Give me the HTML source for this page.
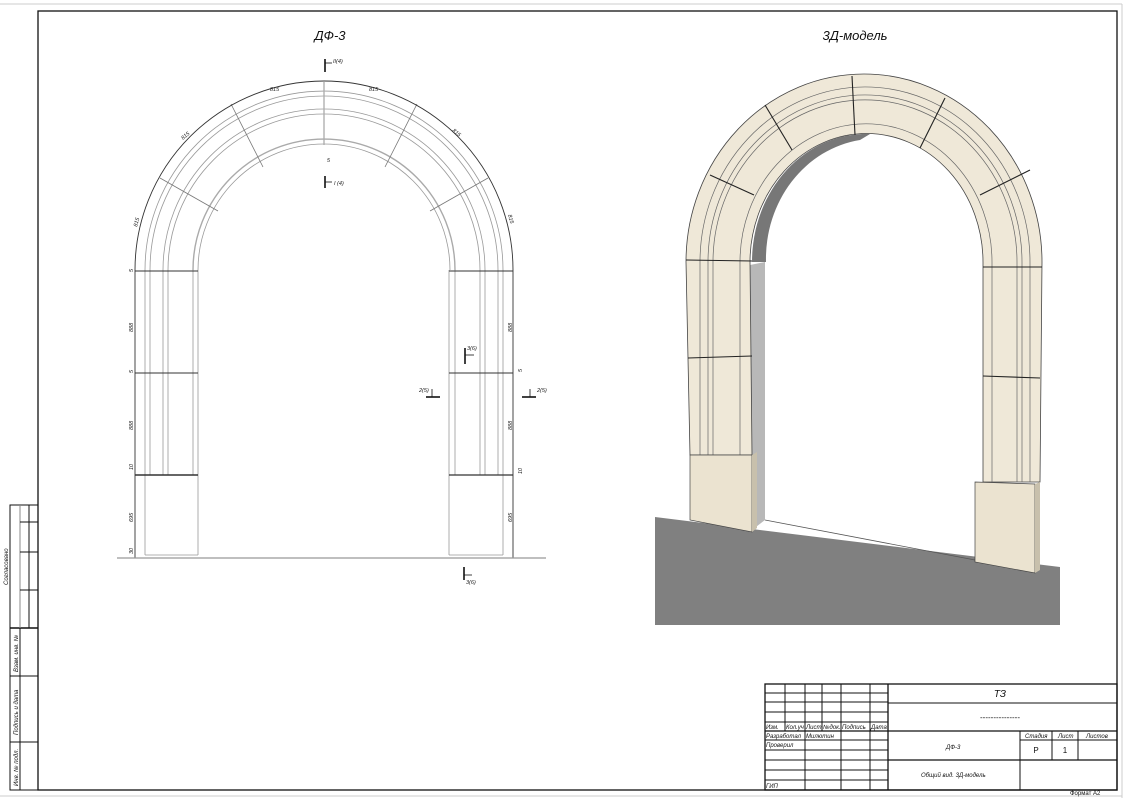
<!DOCTYPE html>
<html><head><meta charset="utf-8"><style>
html,body{margin:0;padding:0;background:#fff;}
svg{display:block;font-family:"Liberation Sans",sans-serif;}
</style></head><body>
<svg width="1125" height="798" viewBox="0 0 1125 798" xmlns="http://www.w3.org/2000/svg">
<rect width="1125" height="798" fill="#fff"/>
<line x1="0" y1="4" x2="1122" y2="4" stroke="#ccc"/>
<line x1="1122" y1="4" x2="1122" y2="798" stroke="#ccc"/>
<line x1="0" y1="796" x2="1122" y2="796" stroke="#ccc"/>
<rect x="38" y="11" width="1079" height="779" fill="none" stroke="#111" stroke-width="1.3"/>
<g stroke="#111" fill="none" stroke-width="1">
<rect x="10" y="505" width="28" height="285"/>
<line x1="10" y1="628" x2="38" y2="628" stroke-width="1.5"/>
<line x1="29" y1="505" x2="29" y2="628"/>
<line x1="20" y1="505" x2="20" y2="628" stroke="#888"/>
<line x1="20" y1="522" x2="38" y2="522"/>
<line x1="20" y1="552" x2="38" y2="552"/>
<line x1="20" y1="590" x2="38" y2="590"/>
<line x1="20" y1="628" x2="20" y2="790"/>
<line x1="10" y1="676" x2="38" y2="676"/>
<line x1="10" y1="742" x2="38" y2="742"/>
</g>
<g font-size="6" fill="#111" font-style="italic">
<text transform="translate(8,585) rotate(-90)">Согласовано</text>
<text transform="translate(18,672) rotate(-90)">Взам. инв. №</text>
<text transform="translate(18,735) rotate(-90)">Подпись и дата</text>
<text transform="translate(18,786) rotate(-90)">Инв. № подл.</text>
</g>

<text x="330" y="40" font-size="13" font-style="italic" text-anchor="middle" fill="#111">ДФ-3</text>
<text x="855" y="40" font-size="13" font-style="italic" text-anchor="middle" fill="#111">3Д-модель</text>

<g fill="none" stroke="#999" stroke-width="0.8">
<path d="M145 270 A179 179 0 0 1 503 270"/>
<path d="M150 270 A174 174 0 0 1 498 270"/>
<path d="M163 270 A161 161 0 0 1 485 270"/>
<path d="M168 270 A156 156 0 0 1 480 270"/>
<path d="M193 270 A131 131 0 0 1 455 270" stroke="#aaa" stroke-width="1.4"/>
<path d="M198 270 A126 126 0 0 1 450 270"/>
<line x1="145" y1="270" x2="145" y2="555"/><line x1="150" y1="270" x2="150" y2="475"/>
<line x1="163" y1="270" x2="163" y2="475"/><line x1="168" y1="270" x2="168" y2="475"/>
<line x1="193" y1="270" x2="193" y2="475"/><line x1="198" y1="270" x2="198" y2="555"/>
<line x1="503" y1="270" x2="503" y2="555"/><line x1="498" y1="270" x2="498" y2="475"/>
<line x1="485" y1="270" x2="485" y2="475"/><line x1="480" y1="270" x2="480" y2="475"/>
<line x1="455" y1="270" x2="455" y2="475"/><line x1="449" y1="270" x2="449" y2="555"/>
<line x1="145" y1="555" x2="198" y2="555"/><line x1="449" y1="555" x2="503" y2="555"/>
<line x1="324" y1="82" x2="324" y2="145" stroke="#aaa" stroke-width="1.3"/>
<line x1="231" y1="104" x2="263" y2="167" stroke="#777"/>
<line x1="417" y1="104" x2="385" y2="167" stroke="#777"/>
<line x1="160" y1="178" x2="218" y2="211" stroke="#777"/>
<line x1="488" y1="178" x2="430" y2="211" stroke="#777"/>
</g>
<g stroke="#333" stroke-width="0.9" fill="none">
<path d="M135 270 A189 189 0 0 1 513 270"/>
<line x1="135" y1="270" x2="135" y2="558"/>
<line x1="513" y1="270" x2="513" y2="558"/>
<line x1="135" y1="271" x2="198" y2="271"/><line x1="449" y1="271" x2="513" y2="271"/>
<line x1="135" y1="373" x2="198" y2="373"/><line x1="449" y1="373" x2="513" y2="373"/>
<line x1="135" y1="475" x2="198" y2="475" stroke-width="1.6"/><line x1="449" y1="475" x2="513" y2="475" stroke-width="1.2"/>
<line x1="117" y1="558" x2="546" y2="558" stroke="#999" stroke-width="1.3"/>
</g>
<g stroke="#111" stroke-width="1.6">
<line x1="325" y1="59" x2="325" y2="72"/><line x1="325" y1="63" x2="332" y2="63" stroke-width="0.8"/>
<line x1="325" y1="176" x2="325" y2="188"/><line x1="325" y1="182" x2="332" y2="182" stroke-width="0.8"/>
<line x1="465" y1="348" x2="465" y2="364"/><line x1="465" y1="355" x2="474" y2="355" stroke-width="0.8"/>
<line x1="426" y1="397" x2="440" y2="397"/><line x1="432" y1="389" x2="432" y2="397" stroke-width="0.8"/>
<line x1="522" y1="397" x2="536" y2="397"/><line x1="530" y1="389" x2="530" y2="397" stroke-width="0.8"/>
<line x1="464" y1="567" x2="464" y2="580"/><line x1="464" y1="575" x2="472" y2="575" stroke-width="0.8"/>
</g>
<g font-size="5.5" fill="#222" font-style="italic">
<text x="333" y="63">II(4)</text><text x="334" y="185">I (4)</text>
<text x="467" y="350">3(6)</text><text x="419" y="392">2(5)</text><text x="537" y="392">2(5)</text>
<text x="466" y="584">3(6)</text>
<text x="270" y="91">815</text><text x="369" y="91">815</text>
<text transform="translate(183,140) rotate(-40)">815</text>
<text transform="translate(452,131) rotate(40)">815</text>
<text transform="translate(137,227) rotate(-75)">815</text>
<text transform="translate(508,215) rotate(75)">815</text>
<text transform="translate(133,332) rotate(-90)">888</text>
<text transform="translate(133,430) rotate(-90)">888</text>
<text transform="translate(133,522) rotate(-90)">695</text>
<text transform="translate(133,554) rotate(-90)">30</text>
<text transform="translate(133,470) rotate(-90)">10</text>
<text transform="translate(133,272) rotate(-90)">5</text>
<text transform="translate(133,373) rotate(-90)">5</text>
<text transform="translate(512,332) rotate(-90)">888</text>
<text transform="translate(512,430) rotate(-90)">888</text>
<text transform="translate(512,522) rotate(-90)">695</text>
<text transform="translate(522,372) rotate(-90)">5</text>
<text transform="translate(522,474) rotate(-90)">10</text>
<text x="327" y="162">5</text>
</g>

<rect x="655" y="53" width="405" height="572" fill="#fff"/>
<polygon points="655,517 1060,567 1060,625 655,625" fill="#808080"/>
<line x1="765" y1="520" x2="975" y2="560" stroke="#555" stroke-width="0.8"/>
<polygon points="750,265 765,262 765,520 752,530" fill="#b8b8b8"/>
<path d="M752 262 A114 128 0 0 1 870 134 L860 140 A110 120 0 0 0 766 262 Z" fill="#555" opacity="0.8"/>
<path d="M686 262 A178 188 0 0 1 1042 262 L1040 482 L983 482 L983 262 A116 128 0 0 0 750 262 L752 455 L690 455 Z" fill="#efe8d8" stroke="#444" stroke-width="0.8"/>
<g fill="none" stroke="#666" stroke-width="0.7">
<path d="M700 262 A164 174 0 0 1 1030 262"/>
<path d="M708 262 A156 166 0 0 1 1022 262"/>
<path d="M713 262 A150 160 0 0 1 1017 262"/>
<path d="M740 262 A124 136 0 0 1 992 262"/>
<line x1="700" y1="262" x2="700" y2="455"/><line x1="708" y1="262" x2="708" y2="455"/>
<line x1="713" y1="262" x2="713" y2="455"/><line x1="740" y1="262" x2="740" y2="455"/>
<line x1="1030" y1="262" x2="1030" y2="482"/><line x1="1022" y1="262" x2="1022" y2="482"/>
<line x1="1017" y1="262" x2="1017" y2="482"/><line x1="992" y1="262" x2="992" y2="482"/>
</g>
<g stroke="#222" stroke-width="1.1" fill="none">
<line x1="686" y1="260" x2="752" y2="261"/><line x1="983" y1="267" x2="1042" y2="267"/>
<line x1="688" y1="358" x2="752" y2="356"/><line x1="983" y1="376" x2="1040" y2="378"/>
<line x1="852" y1="76" x2="855" y2="135"/>
<line x1="765" y1="105" x2="792" y2="150"/>
<line x1="945" y1="98" x2="920" y2="148"/>
<line x1="710" y1="175" x2="754" y2="195"/>
<line x1="1030" y1="170" x2="980" y2="195"/>
</g>
<polygon points="690,455 752,455 752,532 690,520" fill="#ebe3d0" stroke="#444" stroke-width="0.7"/>
<polygon points="752,455 757,452 757,528 752,532" fill="#c8c0ac"/>
<polygon points="975,482 1035,484 1035,573 975,562" fill="#ebe3d0" stroke="#444" stroke-width="0.7"/>
<polygon points="1035,484 1040,482 1040,570 1035,573" fill="#c8c0ac"/>

<g stroke="#111" fill="none" stroke-width="1">
<rect x="765" y="684" width="352" height="106" stroke-width="1.3"/>
<line x1="888" y1="684" x2="888" y2="790" stroke-width="1.3"/>
<line x1="785" y1="684" x2="785" y2="731"/><line x1="805" y1="684" x2="805" y2="790"/>
<line x1="822" y1="684" x2="822" y2="731"/><line x1="841" y1="684" x2="841" y2="790"/>
<line x1="870" y1="684" x2="870" y2="790"/>
<line x1="765" y1="693" x2="888" y2="693"/><line x1="765" y1="702" x2="888" y2="702"/>
<line x1="765" y1="712" x2="888" y2="712"/><line x1="765" y1="722" x2="888" y2="722"/>
<line x1="765" y1="731" x2="1117" y2="731" stroke-width="1.3"/>
<line x1="765" y1="740" x2="888" y2="740"/><line x1="765" y1="750" x2="888" y2="750"/>
<line x1="765" y1="760" x2="888" y2="760"/><line x1="765" y1="770" x2="888" y2="770"/>
<line x1="765" y1="780" x2="888" y2="780"/>
<line x1="888" y1="703" x2="1117" y2="703"/>
<line x1="888" y1="760" x2="1117" y2="760" stroke-width="1.3"/>
<line x1="1020" y1="731" x2="1020" y2="790"/>
<line x1="1052" y1="731" x2="1052" y2="760"/><line x1="1078" y1="731" x2="1078" y2="760"/>
<line x1="1020" y1="740" x2="1117" y2="740"/>
</g>
<g font-size="6" font-style="italic" fill="#111">
<text x="766" y="729">Изм.</text><text x="786" y="729">Кол.уч</text><text x="806" y="729">Лист</text>
<text x="823" y="729">№док.</text><text x="842" y="729">Подпись</text><text x="871" y="729">Дата</text>
<text x="766" y="738">Разработал</text><text x="806" y="738">Милютин</text>
<text x="766" y="747">Проверил</text><text x="766" y="788">ГИП</text>
<text x="1025" y="738">Стадия</text><text x="1058" y="738">Лист</text><text x="1086" y="738">Листов</text>
<text x="946" y="749">ДФ-3</text><text x="921" y="777">Общий вид. 3Д-модель</text>
</g>
<text x="1000" y="697" font-size="10" font-style="italic" text-anchor="middle" fill="#111">ТЗ</text>
<text x="1000" y="720" font-size="8" text-anchor="middle" fill="#111">---------------</text>
<text x="1036" y="753" font-size="8" text-anchor="middle" fill="#111">Р</text>
<text x="1065" y="753" font-size="8" text-anchor="middle" fill="#111">1</text>
<text x="1070" y="795" font-size="6" fill="#111">Формат А2</text>
</svg>
</body></html>
